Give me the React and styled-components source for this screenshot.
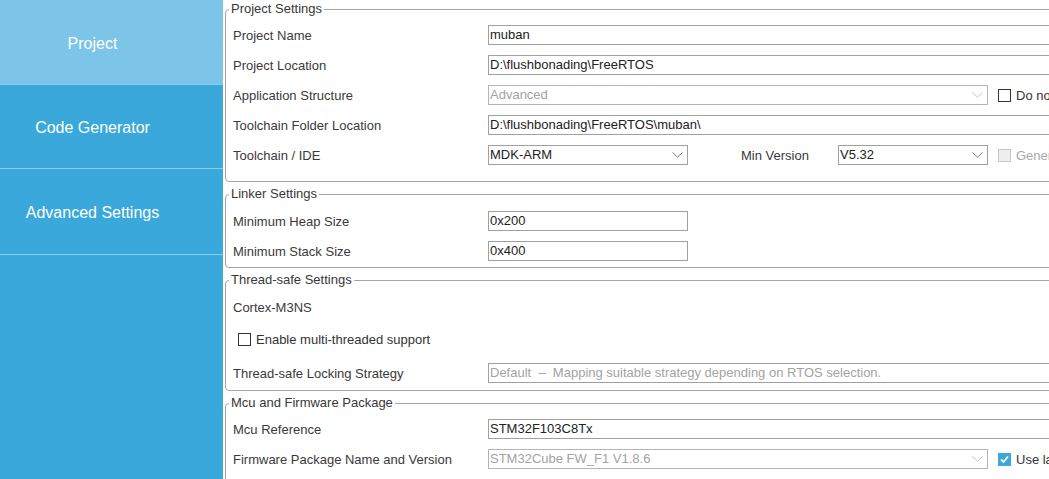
import React from 'react';
import styled, { createGlobalStyle } from 'styled-components';

const GlobalStyle = createGlobalStyle`
  html, body, #root {
    margin: 0;
    height: 100%;
  }
  body {
    font-family: "Liberation Sans", Arial, sans-serif;
    background: #ffffff;
    overflow: hidden;
  }
`;

const Page = styled.div`
  display: flex;
  height: 100vh;
  width: 100vw;
  overflow: hidden;
`;

const Sidebar = styled.nav`
  width: 223px;
  flex: 0 0 223px;
  background: #3aa8db;
  display: flex;
  flex-direction: column;
`;

const NavItem = styled.div`
  box-sizing: border-box;
  height: ${p => p.$h || 85}px;
  display: flex;
  align-items: center;
  justify-content: center;
  padding: 3px 38px 0 0;
  color: #ffffff;
  font-size: 16px;
  background: ${p => (p.$active ? '#7cc4e8' : '#3aa8db')};
  border-bottom: 1px solid #8ccdee;
  cursor: pointer;
`;

const Main = styled.main`
  flex: 1;
  overflow: hidden;
  padding: 1px 0 0 2px;
  display: flex;
  flex-direction: column;
  gap: 4px;
`;

const Group = styled.fieldset`
  margin: 0;
  width: 900px;
  min-width: 900px;
  border: 1px solid #a4a4a4;
  border-radius: 4px;
  padding: ${p => p.$top ?? 4}px 0 ${p => p.$bottom || 0}px 7px;
`;

const Legend = styled.legend`
  font-size: 13px;
  line-height: 16px;
  color: #383838;
  padding: 0 2px;
  margin-left: -4px;
`;

const Row = styled.div`
  display: flex;
  align-items: center;
  height: ${p => p.$h || 30}px;
`;

const Label = styled.span`
  flex: 0 0 ${p => p.$w || 255}px;
  margin-left: ${p => p.$ml || 0}px;
  font-size: 13px;
  color: #3a3a3a;
  white-space: nowrap;
`;

const TextBox = styled.div`
  box-sizing: border-box;
  width: ${p => p.$w || 600}px;
  flex: 0 0 auto;
  height: 20px;
  border: 1px solid #a0a0a0;
  padding-left: 1px;
  font-size: 13px;
  line-height: 18px;
  color: ${p => (p.$disabled ? '#a3a3a3' : '#222222')};
  background: #ffffff;
  white-space: nowrap;
  overflow: hidden;
`;

const SelectBox = styled(TextBox)`
  display: flex;
  align-items: center;
  justify-content: space-between;
  padding-right: 4px;
  border-color: ${p => (p.$disabled ? '#b4b4b4' : '#a0a0a0')};
`;

const Check = styled.label`
  display: flex;
  align-items: center;
  gap: 5px;
  margin-left: ${p => p.$ml || 0}px;
  font-size: 13px;
  color: ${p => (p.$disabled ? '#a8a8a8' : '#333333')};
  white-space: nowrap;
`;

const Box = styled.span`
  box-sizing: border-box;
  width: 13px;
  height: 13px;
  flex: 0 0 13px;
  display: flex;
  align-items: center;
  justify-content: center;
  border: 1px solid ${p => (p.$checked ? '#3aa8db' : p.$disabled ? '#c8c8c8' : '#333333')};
  background: ${p => (p.$checked ? '#3aa8db' : p.$disabled ? '#eeeeee' : '#ffffff')};
`;

const Chevron = ({ disabled }) => (
  <svg width="11" height="6" viewBox="0 0 11 6">
    <path d="M0.5 0.5 L5.5 5.2 L10.5 0.5" fill="none" stroke={disabled ? '#c4c4c4' : '#7a7a7a'} strokeWidth="1" />
  </svg>
);

const Select = ({ value, w, disabled }) => (
  <SelectBox $w={w} $disabled={disabled}>
    <span>{value}</span>
    <Chevron disabled={disabled} />
  </SelectBox>
);

const CheckBox = ({ label, checked, disabled, ml }) => (
  <Check $ml={ml} $disabled={disabled}>
    <Box $checked={checked} $disabled={disabled}>
      {checked && (
        <svg width="11" height="11" viewBox="0 0 11 11">
          <path d="M2 5.5 L4.5 8 L9 2.5" fill="none" stroke="#ffffff" strokeWidth="1.8" />
        </svg>
      )}
    </Box>
    {label}
  </Check>
);

export default function App() {
  return (
    <Page>
      <GlobalStyle />
      <Sidebar>
        <NavItem $active>Project</NavItem>
        <NavItem $h={84}>Code Generator</NavItem>
        <NavItem $h={86}>Advanced Settings</NavItem>
      </Sidebar>
      <Main>
        <Group $top={3} $bottom={11}>
          <Legend>Project Settings</Legend>
          <Row>
            <Label>Project Name</Label>
            <TextBox>muban</TextBox>
          </Row>
          <Row>
            <Label>Project Location</Label>
            <TextBox>D:\flushbonading\FreeRTOS</TextBox>
          </Row>
          <Row>
            <Label>Application Structure</Label>
            <Select value="Advanced" w={500} disabled />
            <CheckBox label="Do not generate the main()" ml={10} />
          </Row>
          <Row>
            <Label>Toolchain Folder Location</Label>
            <TextBox>D:\flushbonading\FreeRTOS\muban\</TextBox>
          </Row>
          <Row>
            <Label>Toolchain / IDE</Label>
            <Select value="MDK-ARM" w={200} />
            <Label $w={97} $ml={53}>Min Version</Label>
            <Select value="V5.32" w={150} />
            <CheckBox label="Generate Under Root" ml={10} disabled />
          </Row>
        </Group>

        <Group $bottom={1}>
          <Legend>Linker Settings</Legend>
          <Row>
            <Label>Minimum Heap Size</Label>
            <TextBox $w={200}>0x200</TextBox>
          </Row>
          <Row>
            <Label>Minimum Stack Size</Label>
            <TextBox $w={200}>0x400</TextBox>
          </Row>
        </Group>

        <Group $bottom={0}>
          <Legend>Thread-safe Settings</Legend>
          <Row $h={30}>
            <Label>Cortex-M3NS</Label>
          </Row>
          <Row $h={34}>
            <CheckBox label="Enable multi-threaded support" ml={5} />
          </Row>
          <Row $h={34}>
            <Label>Thread-safe Locking Strategy</Label>
            <TextBox $disabled>Default &nbsp;–&nbsp; Mapping suitable strategy depending on RTOS selection.</TextBox>
          </Row>
        </Group>

        <Group $top={3} $bottom={10}>
          <Legend>Mcu and Firmware Package</Legend>
          <Row>
            <Label>Mcu Reference</Label>
            <TextBox>STM32F103C8Tx</TextBox>
          </Row>
          <Row>
            <Label>Firmware Package Name and Version</Label>
            <Select value="STM32Cube FW_F1 V1.8.6" w={500} disabled />
            <CheckBox label="Use latest available version" ml={10} checked />
          </Row>
        </Group>
      </Main>
    </Page>
  );
}
